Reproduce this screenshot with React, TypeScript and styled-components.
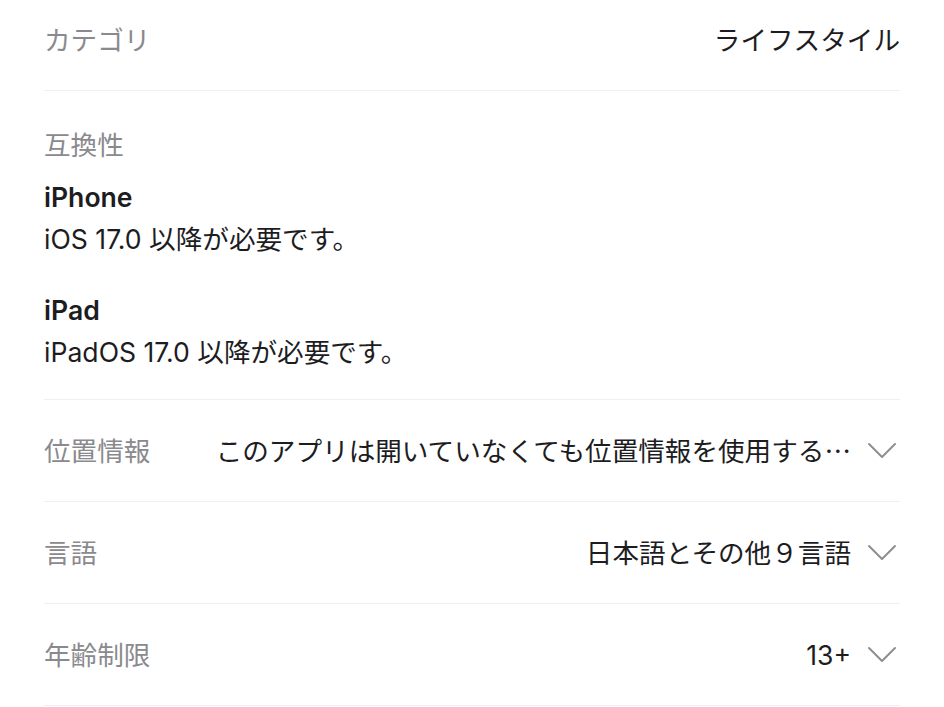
import styled, { createGlobalStyle } from 'styled-components';

const GlobalStyle = createGlobalStyle`
  html, body {
    margin: 0;
    padding: 0;
    background: #ffffff;
  }
  body {
    font-family: Inter, "Noto Sans CJK JP", sans-serif;
    -webkit-font-smoothing: antialiased;
  }
`;

type InfoRow = {
  label: string;
  value: string;
  truncated?: boolean;
  expandable?: boolean;
};

const rows: InfoRow[] = [
  { label: '位置情報', value: 'このアプリは開いていなくても位置情報を使用する', truncated: true, expandable: true },
  { label: '言語', value: '日本語とその他９言語', expandable: true },
  { label: '年齢制限', value: '13+', expandable: true },
];

const devices = [
  { name: 'iPhone', requirement: 'iOS 17.0 以降が必要です。' },
  { name: 'iPad', requirement: 'iPadOS 17.0 以降が必要です。' },
];

const Chevron = () => (
  <ChevronIcon viewBox="0 0 30 18" aria-hidden>
    <path d="M2 2 L15 15 L28 2" fill="none" stroke="#8e8e93" strokeWidth="2" strokeLinecap="round" strokeLinejoin="round" />
  </ChevronIcon>
);

export default function App() {
  return (
    <>
      <GlobalStyle />
      <Page>
        <Row>
          <Label>カテゴリ</Label>
          <Value>ライフスタイル</Value>
        </Row>

        <Compat>
          <Label>互換性</Label>
          <DeviceList>
            {devices.map((d) => (
              <Device key={d.name}>
                <DeviceName>{d.name}</DeviceName>
                <DeviceText>{d.requirement}</DeviceText>
              </Device>
            ))}
          </DeviceList>
        </Compat>

        {rows.map((r) => (
          <Row key={r.label}>
            <Label>{r.label}</Label>
            <Value>
              {r.value}
              {r.truncated && <Ellipsis>…</Ellipsis>}
            </Value>
            {r.expandable && <Chevron />}
          </Row>
        ))}
      </Page>
    </>
  );
}

const Page = styled.div`
  margin-top: -11px;
  padding: 0 44px;
`;

const Row = styled.div`
  display: flex;
  align-items: center;
  height: 101px;
  border-bottom: 1px solid #efeff1;
  font-size: 26.6px;
`;

const Label = styled.div`
  flex-shrink: 0;
  color: #8a8a8e;
  font-size: 26.6px;
  line-height: 42px;
`;

const Value = styled.div`
  flex: 1;
  min-width: 0;
  margin-left: 60px;
  text-align: right;
  white-space: nowrap;
  overflow: hidden;
  color: #1d1d1f;
  line-height: 42px;
`;

const Ellipsis = styled.span`
  font-family: "Noto Sans CJK JP", sans-serif;
`;

const ChevronIcon = styled.svg`
  flex-shrink: 0;
  width: 30px;
  height: 18px;
  margin-left: 16px;
  margin-right: 3px;
`;

const Compat = styled.div`
  display: flex;
  flex-direction: column;
  padding: 33px 0 26px;
  border-bottom: 1px solid #efeff1;
`;

const DeviceList = styled.div`
  display: flex;
  flex-direction: column;
  gap: 29px;
  margin-top: 10px;
`;

const Device = styled.div`
  display: flex;
  flex-direction: column;
`;

const DeviceName = styled.div`
  font-size: 26.6px;
  line-height: 42px;
  font-weight: 600;
  color: #1d1d1f;
`;

const DeviceText = styled.div`
  font-size: 26.6px;
  line-height: 42px;
  color: #1d1d1f;
`;
